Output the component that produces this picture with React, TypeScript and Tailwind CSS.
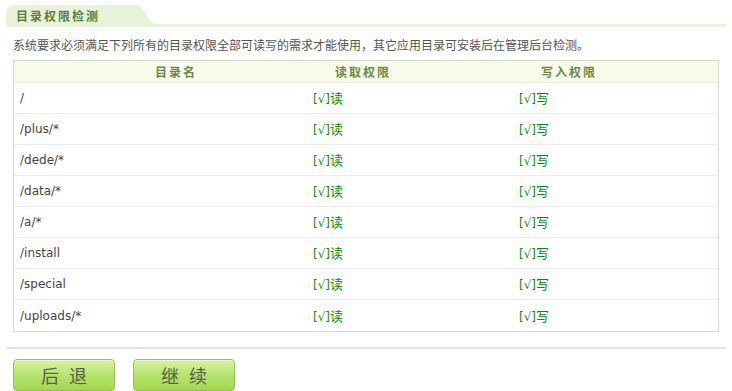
import React from "react";

const rows = ["/", "/plus/*", "/dede/*", "/data/*", "/a/*", "/install", "/special", "/uploads/*"];

const cjk = "font-['Noto_Sans_CJK_SC','Noto_Sans',sans-serif]";
const mixed = "font-['DejaVu_Sans','Noto_Sans_CJK_SC',sans-serif]";

function Btn({ a, b }: { a: string; b: string }) {
  return (
    <button
      className={`w-[102px] h-[32px] rounded-[4px] border border-[#95c05a] bg-gradient-to-b from-[#d6f3a2] via-[#b5e46c] to-[#a2d84c] shadow-[inset_0_1px_0_#e8fbc8] flex items-center justify-center gap-[10px] text-[18px] leading-none text-[#5e5e4e] ${cjk}`}
    >
      <span>{a}</span>
      <span>{b}</span>
    </button>
  );
}

export default function App() {
  return (
    <div className="w-[732px] h-[391px] bg-white overflow-hidden">
      <div className="pt-[5px] pl-[6px] pr-[6px] flex items-end">
        <div className="h-[22px] w-[127px] bg-[#e8f2da] rounded-tl-[8px] rounded-bl-[3px] flex items-center pl-[10px]">
          <span className={`text-[12px] font-bold tracking-[2px] text-[#5f7f3c] whitespace-nowrap ${cjk}`}>目录权限检测</span>
        </div>
        <svg width="26" height="22" viewBox="0 0 26 22" className="block shrink-0">
          <path d="M0 0 L4 0 C12 0 14 19 24 19 L26 19 L26 22 L0 22 Z" fill="#e8f2da" />
        </svg>
        <div className="flex-1 h-[3px] bg-[#e8f2da]" />
      </div>

      <div className={`mt-[9px] pl-[13px] text-[12px] leading-[18px] text-[#555] ${cjk}`}>
        系统要求必须满足下列所有的目录权限全部可读写的需求才能使用，其它应用目录可安装后在管理后台检测。
      </div>

      <div className="mt-[6px] ml-[13px] w-[706px] border border-[#d3dcc8]">
        <div className="grid grid-cols-[293px_206px_1fr] h-[22px] bg-[#f8fbea] border-b border-[#ebf1dc] items-center">
          <div className={`pl-[141px] text-[12px] font-bold tracking-[2px] text-[#6b8a44] ${cjk}`}>目录名</div>
          <div className={`pl-[28px] text-[12px] font-bold tracking-[2px] text-[#6b8a44] ${cjk}`}>读取权限</div>
          <div className={`pl-[28px] text-[12px] font-bold tracking-[2px] text-[#6b8a44] ${cjk}`}>写入权限</div>
        </div>
        {rows.map((r, i) => (
          <div
            key={r}
            className={`grid grid-cols-[293px_206px_1fr] h-[31px] items-center ${i < rows.length - 1 ? "border-b border-[#ececec]" : ""}`}
          >
            <div className={`pl-[6px] text-[12px] text-[#444] ${mixed}`}>{r}</div>
            <div className={`pl-[6px] text-[12px] text-[#0a8a0a] ${mixed}`}>[√]<span className={`text-[13px] ${cjk}`}>读</span></div>
            <div className={`pl-[6px] text-[12px] text-[#0a8a0a] ${mixed}`}>[√]<span className={`text-[13px] ${cjk}`}>写</span></div>
          </div>
        ))}
      </div>

      <div className="mt-[15px] mx-[6px] h-[2px] bg-[#e2e2e2]" />

      <div className="mt-[10px] pl-[13px] flex gap-[18px]">
        <Btn a="后" b="退" />
        <Btn a="继" b="续" />
      </div>
    </div>
  );
}
